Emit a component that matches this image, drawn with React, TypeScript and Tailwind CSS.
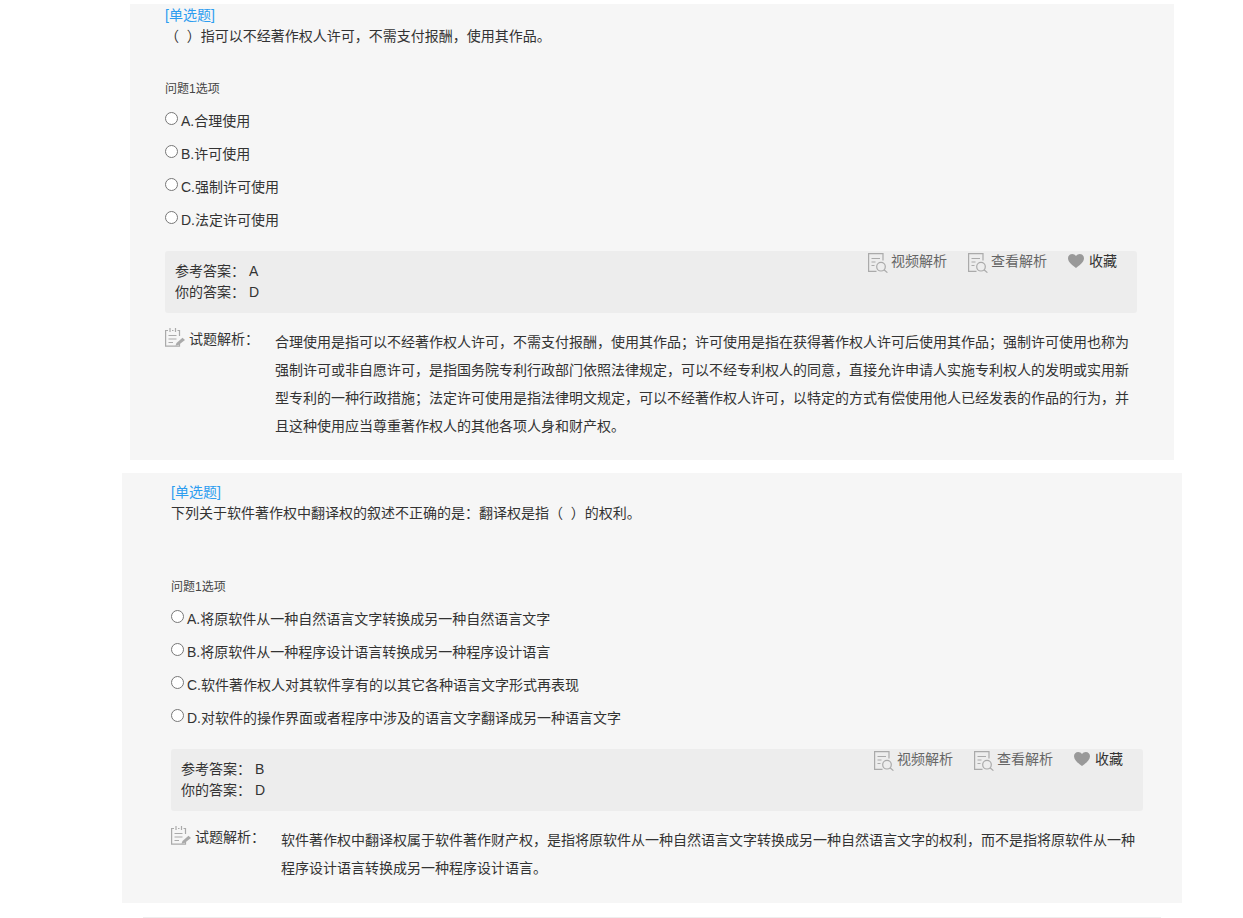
const FONT = "font-['Liberation_Sans','Noto_Sans_CJK_SC',sans-serif]";

function NoteIcon() {
  return (
    <svg width="20" height="19" viewBox="0 0 20 19" fill="none" className="block shrink-0">
      <path d="M3 2.5H0.6V18.2H14.5V14" stroke="#aaa" strokeWidth="1.2" />
      <path d="M5 0V4M10.5 0V4" stroke="#aaa" strokeWidth="1.2" />
      <path d="M7 2.5H8.5M12.5 2.5H14.5V8" stroke="#aaa" strokeWidth="1.2" />
      <path d="M3.5 7.5H11.5M3.5 11H11.5M3.5 14.5H8" stroke="#aaa" strokeWidth="1.2" />
      <path d="M10.5 17.8L11.5 15L17.5 9.8L20 12L13.5 17Z" fill="#aaa" />
    </svg>
  );
}

function DocSearchIcon() {
  return (
    <svg width="20" height="20" viewBox="0 0 20 20" fill="none" className="block shrink-0">
      <path d="M8.5 18.4H0.6V0.6H15V7.5" stroke="#aaa" strokeWidth="1.2" />
      <path d="M3.5 5.5H12M3.5 9H7.5M3.5 12.5H6.5" stroke="#aaa" strokeWidth="1.2" />
      <circle cx="13" cy="13.7" r="4.3" stroke="#aaa" strokeWidth="1.2" />
      <path d="M16 16.8L19.4 19.6" stroke="#aaa" strokeWidth="1.2" />
    </svg>
  );
}

function HeartIcon() {
  return (
    <svg width="16" height="14" viewBox="0 0 16 14" className="block shrink-0">
      <path d="M8 14C5 11.6 0 8.5 0 4.2C0 1.7 1.9 0 4.1 0C5.8 0 7.2 0.8 8 2.1C8.8 0.8 10.2 0 11.9 0C14.1 0 16 1.7 16 4.2C16 8.5 11 11.6 8 14Z" fill="#999" />
    </svg>
  );
}

type Q = {
  title: string;
  gap: string;
  options: string[];
  answer: string;
  yours: string;
  analysis: string;
  card: string;
};

function Question({ q }: { q: Q }) {
  return (
    <div className={q.card}>
      <div className="w-[972px]">
        <div className="h-[21px] text-[14px] leading-[21px] text-[#2c9df0]">[单选题]</div>
        <div className="h-[21px] whitespace-pre text-[14px] leading-[21px] text-[#333]">{q.title}</div>
        <div className={`${q.gap} h-[18px] text-[12px] leading-[18px] text-[#444]`}>问题1选项</div>
        <div className="mt-[7px] flex flex-col">
          {q.options.map((o) => (
            <label key={o} className="flex h-[33px] items-center text-[14px] text-[#333]">
              <input type="radio" name={q.title} className="m-0 mb-[7px] mr-[3px] h-[13px] w-[13px]" />
              <span>{o}</span>
            </label>
          ))}
        </div>
        <div className="mt-[14px] flex h-[62px] justify-between rounded-[3px] bg-[#ededed] pl-[10px] pr-[20px]">
          <div className="pt-[10px] text-[14px] leading-[21px] text-[#333]">
            <div className="flex"><span className="w-[74px]">参考答案：</span><span>{q.answer}</span></div>
            <div className="flex"><span className="w-[74px]">你的答案：</span><span>{q.yours}</span></div>
          </div>
          <div className="flex h-[21px] items-start text-[14px] leading-[21px]">
            <div className="flex items-start gap-[3px] text-[#666]"><span className="pt-[2px]"><DocSearchIcon /></span><span>视频解析</span></div>
            <div className="ml-[21px] flex items-start gap-[3px] text-[#666]"><span className="pt-[2px]"><DocSearchIcon /></span><span>查看解析</span></div>
            <div className="ml-[21px] flex h-[20px] items-center gap-[5px] text-[#333]"><HeartIcon /><span>收藏</span></div>
          </div>
        </div>
        <div className="mt-[15px] flex">
          <div className="flex w-[110px] shrink-0 items-start gap-[4px] text-[14px] leading-[20px] text-[#333]">
            <NoteIcon /><span className="pt-[1px]">试题解析：</span>
          </div>
          <div className="w-[862px] text-[14px] leading-[28px] text-[#333]">{q.analysis}</div>
        </div>
      </div>
    </div>
  );
}

const q1: Q = {
  title: "（  ）指可以不经著作权人许可，不需支付报酬，使用其作品。",
  gap: "mt-[33px]",
  options: ["A.合理使用", "B.许可使用", "C.强制许可使用", "D.法定许可使用"],
  answer: "A",
  yours: "D",
  analysis:
    "合理使用是指可以不经著作权人许可，不需支付报酬，使用其作品；许可使用是指在获得著作权人许可后使用其作品；强制许可使用也称为强制许可或非自愿许可，是指国务院专利行政部门依照法律规定，可以不经专利权人的同意，直接允许申请人实施专利权人的发明或实用新型专利的一种行政措施；法定许可使用是指法律明文规定，可以不经著作权人许可，以特定的方式有偿使用他人已经发表的作品的行为，并且这种使用应当尊重著作权人的其他各项人身和财产权。",
  card: "ml-[130px] mt-[4px] h-[456px] w-[1044px] bg-[#f6f6f6] pl-[35px] pt-[1px]",
};

const q2: Q = {
  title: "下列关于软件著作权中翻译权的叙述不正确的是：翻译权是指（  ）的权利。",
  gap: "mt-[54px]",
  options: [
    "A.将原软件从一种自然语言文字转换成另一种自然语言文字",
    "B.将原软件从一种程序设计语言转换成另一种程序设计语言",
    "C.软件著作权人对其软件享有的以其它各种语言文字形式再表现",
    "D.对软件的操作界面或者程序中涉及的语言文字翻译成另一种语言文字",
  ],
  answer: "B",
  yours: "D",
  analysis:
    "软件著作权中翻译权属于软件著作财产权，是指将原软件从一种自然语言文字转换成另一种自然语言文字的权利，而不是指将原软件从一种程序设计语言转换成另一种程序设计语言。",
  card: "ml-[122px] mt-[13px] h-[430px] w-[1060px] bg-[#f6f6f6] pl-[49px] pt-[9px]",
};

export default function App() {
  return (
    <div className={`${FONT} h-[918px] w-[1243px] overflow-hidden bg-white`}>
      <Question q={q1} />
      <Question q={q2} />
      <div className="ml-[143px] mt-[14px] h-px w-[1018px] bg-[#eee]" />
    </div>
  );
}
